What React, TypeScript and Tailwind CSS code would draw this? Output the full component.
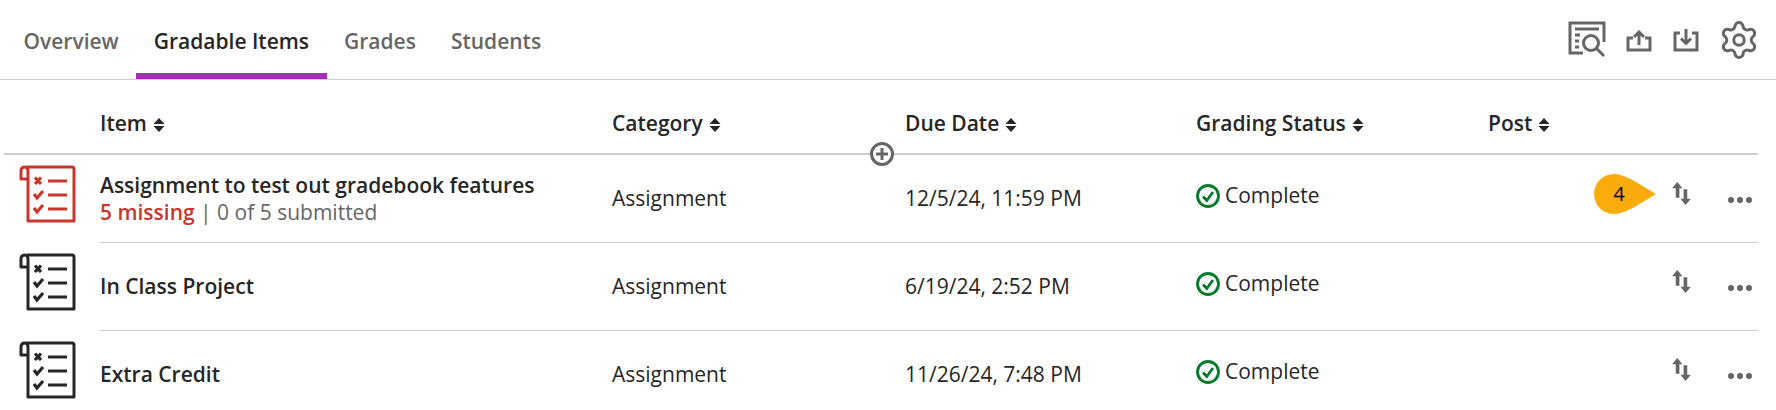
import { ReactNode } from 'react'
import { Settings } from 'lucide-react'

const COLUMNS = [
  { label: 'Item', className: 'w-[512px]' },
  { label: 'Category', className: 'w-[293px]' },
  { label: 'Due Date', className: 'w-[291px]' },
  { label: 'Grading Status', className: 'w-[292px]' },
  { label: 'Post', className: 'w-[200px]' },
]

const ROWS = [
  { title: 'Assignment to test out gradebook features', due: '12/5/24, 11:59 PM', flagged: true },
  { title: 'In Class Project', due: '6/19/24, 2:52 PM', flagged: false },
  { title: 'Extra Credit', due: '11/26/24, 7:48 PM', flagged: false },
]

function SortCaret() {
  return (
    <svg width="12" height="16" viewBox="0 0 12 16" className="ml-[6px] mt-[2px] fill-[#262626]">
      <path d="M6 1 L11.5 7 H0.5 Z M6 15 L0.5 9 H11.5 Z" />
    </svg>
  )
}

function ListIcon({ red }: { red: boolean }) {
  const color = red ? 'stroke-[#c9372c]' : 'stroke-[#262626]'
  return (
    <svg width="57" height="58" viewBox="0 0 57 58" fill="none" className={`${color} shrink-0`} strokeWidth="3">
      <path d="M8 2 H53 Q55 2 55 4 V56 H9 V14" strokeLinejoin="round" />
      <path d="M9 14 H2 V6 Q2 2 6 2 Q9 2 9 6 V14" strokeLinejoin="round" />
      <path d="M16 12.5 L22 19 M22 12.5 L16 19" strokeWidth="3.2" />
      <path d="M15 29 L18 33 L24 26 M15 43 L18 47 L24 40" strokeWidth="3.2" />
      <path d="M29 16 H48 M29 30 H48 M29 44 H48" />
    </svg>
  )
}

function ReportIcon() {
  return (
    <svg width="38" height="37" viewBox="0 0 38 37" fill="none" className="stroke-[#666]" strokeWidth="3">
      <path d="M15 32 H2 V2 H36 V21" />
      <path d="M7 8 H31 M7 14 H12 M7 20 H11 M7 26 H11" />
      <circle cx="23" cy="22" r="7.5" />
      <path d="M28.5 27.500 L36 35" />
    </svg>
  )
}

function UploadIcon() {
  return (
    <svg width="26" height="22" viewBox="0 0 26 22" fill="none" className="stroke-[#666]" strokeWidth="3">
      <path d="M7 8 H2 V20 H24 V8 H19 M13 15 V2 M8 7 L13 2 L18 7" />
    </svg>
  )
}

function DownloadIcon() {
  return (
    <svg width="26" height="24" viewBox="0 0 26 24" fill="none" className="stroke-[#666]" strokeWidth="3">
      <path d="M7 5 H2 V22 H24 V5 H19 M13 1 V15 M8 10.500 L13 15.500 L18 10.500" />
    </svg>
  )
}

function SwapIcon() {
  return (
    <svg width="19" height="23" viewBox="0 0 18 22" className="fill-[#666]">
      <path d="M5 0 L10 6 H7 V15 H3.500 V6 H0 Z M11 7 H14.500 V16 H18 L12.800 22 L8 16 H11 Z" />
    </svg>
  )
}

function MoreIcon() {
  return (
    <span className="flex gap-[3px]">
      <span className="w-[6px] h-[6px] rounded-full bg-[#666]" />
      <span className="w-[6px] h-[6px] rounded-full bg-[#666]" />
      <span className="w-[6px] h-[6px] rounded-full bg-[#666]" />
    </span>
  )
}

function CheckIcon() {
  return (
    <svg width="24" height="24" viewBox="0 0 24 24" fill="none" className="stroke-[#037b2d] shrink-0" strokeWidth="2.800">
      <circle cx="12" cy="12" r="10.500" />
      <path d="M7 12.500 L10.800 16.500 L17 8" strokeWidth="2.800" />
    </svg>
  )
}

function Badge({ children }: { children: ReactNode }) {
  return (
    <span className="relative mr-[16px] w-[62px] h-[40px] flex items-center justify-center pr-[12px] text-[20px] leading-none">
      <svg width="62" height="40" viewBox="0 0 62 40" className="absolute inset-0 fill-[#fbab0b]">
        <path d="M20 0 C32 0 48 12 62 20 C48 28 32 40 20 40 A20 20 0 0 1 20 0 Z" />
      </svg>
      <span className="relative text-black">{children}</span>
    </span>
  )
}

function Tab({ active, children }: { active?: boolean; children: ReactNode }) {
  return (
    <div
      className={`h-[79px] px-[17.5px] pt-[10px] flex items-center border-b-[6px] text-[21px] font-semibold ${
        active ? 'border-[#a22fb4] text-[#262626]' : 'border-transparent text-[#666]'
      }`}
    >
      {children}
    </div>
  )
}

export default function App() {
  return (
    <div className="w-[1776px] h-[410px] overflow-hidden bg-white font-['Open_Sans',sans-serif] text-[#262626]">
      <div className="h-[80px] flex justify-between border-b border-[#cdcdcd] pl-[6px] pr-[16px]">
        <div className="flex">
          <Tab>Overview</Tab>
          <Tab active>Gradable Items</Tab>
          <Tab>Grades</Tab>
          <Tab>Students</Tab>
        </div>
        <div className="flex items-start pt-[21px]">
          <ReportIcon />
          <span className="ml-[20px] mt-[9px]"><UploadIcon /></span>
          <span className="ml-[21px] mt-[7px]"><DownloadIcon /></span>
          <span className="ml-[19px] -mt-[2px]">
            <Settings size={42} strokeWidth={1.7} className="text-[#666]" />
          </span>
        </div>
      </div>

      <div className="pl-[4px] pr-[18px]">
        <div className="relative h-[75px] pl-[96px] pt-[14px] flex items-center border-b-2 border-[#cdcdcd]">
          {COLUMNS.map((col) => (
            <div key={col.label} className={`${col.className} flex items-center text-[21px] font-semibold`}>
              {col.label}
              <SortCaret />
            </div>
          ))}
          <span className="absolute left-[866px] top-[62px] w-[24px] h-[24px] rounded-full border-[3px] border-[#666] bg-white flex items-center justify-center">
            <svg width="14" height="14" viewBox="0 0 14 14" className="stroke-[#666]" strokeWidth="3">
              <path d="M7 1 V13 M1 7 H13" />
            </svg>
          </span>
        </div>

        {ROWS.map((row) => (
          <div key={row.title} className="flex h-[88px]">
            <div className="w-[96px] pl-[15px] pt-[10px]">
              <ListIcon red={row.flagged} />
            </div>
            <div className="flex-1 flex items-center border-b border-[#cdcdcd] text-[21px]">
              <div className="w-[512px]">
                <div className="font-semibold leading-[28px] -mt-[2px]">{row.title}</div>
                {row.flagged && (
                  <div className="leading-[26px]">
                    <span className="text-[#c9372c] font-semibold">5 missing</span>
                    <span className="text-[#666]"> | 0 of 5 submitted</span>
                  </div>
                )}
              </div>
              <div className="w-[293px]">Assignment</div>
              <div className="w-[291px]">{row.due}</div>
              <div className="w-[292px] flex items-center gap-[5px] pb-[5px]">
                <CheckIcon />
                Complete
              </div>
              <div className="flex-1 flex items-center justify-end pr-[6px] pb-[10px]">
                {row.flagged && <Badge>4</Badge>}
                <SwapIcon />
                <span className="ml-[37px] mt-[12px]"><MoreIcon /></span>
              </div>
            </div>
          </div>
        ))}
      </div>
    </div>
  )
}
